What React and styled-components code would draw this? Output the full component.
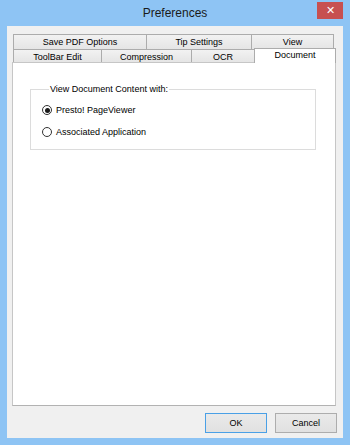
import React from "react";
import styled, { createGlobalStyle } from "styled-components";

const GlobalStyle = createGlobalStyle`
  html, body {
    margin: 0;
    padding: 0;
  }
  body {
    font-family: "Liberation Sans", Arial, sans-serif;
  }
`;

const Window = styled.div`
  width: 350px;
  height: 445px;
  box-sizing: border-box;
  background: #8ec4f4;
  display: flex;
  flex-direction: column;
  padding: 0 7px 7px;
`;

const TitleBar = styled.div`
  height: 26px;
  flex: none;
  display: grid;
  grid-template-columns: 1fr auto 1fr;
`;

const Title = styled.div`
  grid-column: 2;
  font-size: 12px;
  line-height: 26px;
  color: #1a1a1a;
`;

const CloseButton = styled.div`
  grid-column: 3;
  justify-self: end;
  margin-top: 2px;
  width: 26px;
  height: 17px;
  background: #c75050;
  color: #fff;
  font-size: 11px;
  line-height: 17px;
  text-align: center;
`;

const Client = styled.div`
  flex: 1;
  background: #f0f0f0;
  display: flex;
  flex-direction: column;
  padding: 8px 6px 5px 5px;
`;

const TabRow = styled.div`
  display: flex;
  height: ${(p) => p.height}px;
  padding-left: 1px;
  flex: none;
`;

const Tab = styled.div`
  width: ${(p) => p.width}px;
  box-sizing: border-box;
  border: 1px solid #acacac;
  border-bottom: none;
  margin-left: -1px;
  background: linear-gradient(#f2f2f2, #e5e5e5);
  font-size: 9px;
  color: #000;
  text-align: center;
  line-height: ${(p) => p.lh}px;
  &:first-child {
    margin-left: 0;
  }
`;

const ActiveTab = styled(Tab)`
  background: #fff;
  margin-top: -1px;
  margin-bottom: -1px;
  height: 15px;
  position: relative;
  z-index: 1;
`;

const Panel = styled.div`
  flex: 1;
  margin-right: 1px;
  background: #fff;
  border: 1px solid #c6c6c6;
  border-bottom-color: #b2b2b2;
  display: flex;
  flex-direction: column;
`;

const GroupBox = styled.fieldset`
  margin: 21px 19px 0 17px;
  padding: 4px 0 6px 11px;
  border: 1px solid #dcdcdc;
  min-width: 0;
`;

const Legend = styled.legend`
  margin-left: 7px;
  padding: 0 1px;
  font-size: 9px;
  line-height: 11px;
  color: #000;
`;

const RadioRow = styled.label`
  display: flex;
  align-items: center;
  height: 22px;
  gap: 4px;
  font-size: 9px;
  color: #000;
`;

const RadioCircle = styled.span`
  width: 10px;
  height: 10px;
  box-sizing: border-box;
  border: 1px solid #333;
  border-radius: 50%;
  background: #fff;
  display: flex;
  align-items: center;
  justify-content: center;
  &::after {
    content: "";
    width: 5px;
    height: 5px;
    border-radius: 50%;
    background: ${(p) => (p.checked ? "#1a1a1a" : "transparent")};
  }
`;

const ButtonBar = styled.div`
  display: flex;
  justify-content: flex-end;
  gap: 8px;
  margin-top: 7px;
  flex: none;
`;

const Button = styled.div`
  width: 62px;
  height: 20px;
  box-sizing: border-box;
  border: 1px solid ${(p) => (p.primary ? "#4aa0e6" : "#adadad")};
  background: linear-gradient(#eaeaea, #e1e1e1);
  font-size: 9px;
  line-height: 18px;
  text-align: center;
  color: #000;
`;

const Radio = ({ checked, children }) => (
  <RadioRow>
    <RadioCircle checked={checked} />
    {children}
  </RadioRow>
);

export default function App() {
  return (
    <>
      <GlobalStyle />
      <Window>
        <TitleBar>
          <Title>Preferences</Title>
          <CloseButton>✕</CloseButton>
        </TitleBar>
        <Client>
          <TabRow height={15}>
            <Tab width={134} lh={14}>Save PDF Options</Tab>
            <Tab width={106} lh={14}>Tip Settings</Tab>
            <Tab width={83} lh={14}>View</Tab>
          </TabRow>
          <TabRow height={13}>
            <Tab width={89} lh={14}>ToolBar Edit</Tab>
            <Tab width={91} lh={14}>Compression</Tab>
            <Tab width={64} lh={14}>OCR</Tab>
            <ActiveTab width={82} lh={13}>Document</ActiveTab>
          </TabRow>
          <Panel>
            <GroupBox>
              <Legend>View Document Content with:</Legend>
              <Radio checked>Presto! PageViewer</Radio>
              <Radio>Associated Application</Radio>
            </GroupBox>
          </Panel>
          <ButtonBar>
            <Button primary>OK</Button>
            <Button>Cancel</Button>
          </ButtonBar>
        </Client>
      </Window>
    </>
  );
}
